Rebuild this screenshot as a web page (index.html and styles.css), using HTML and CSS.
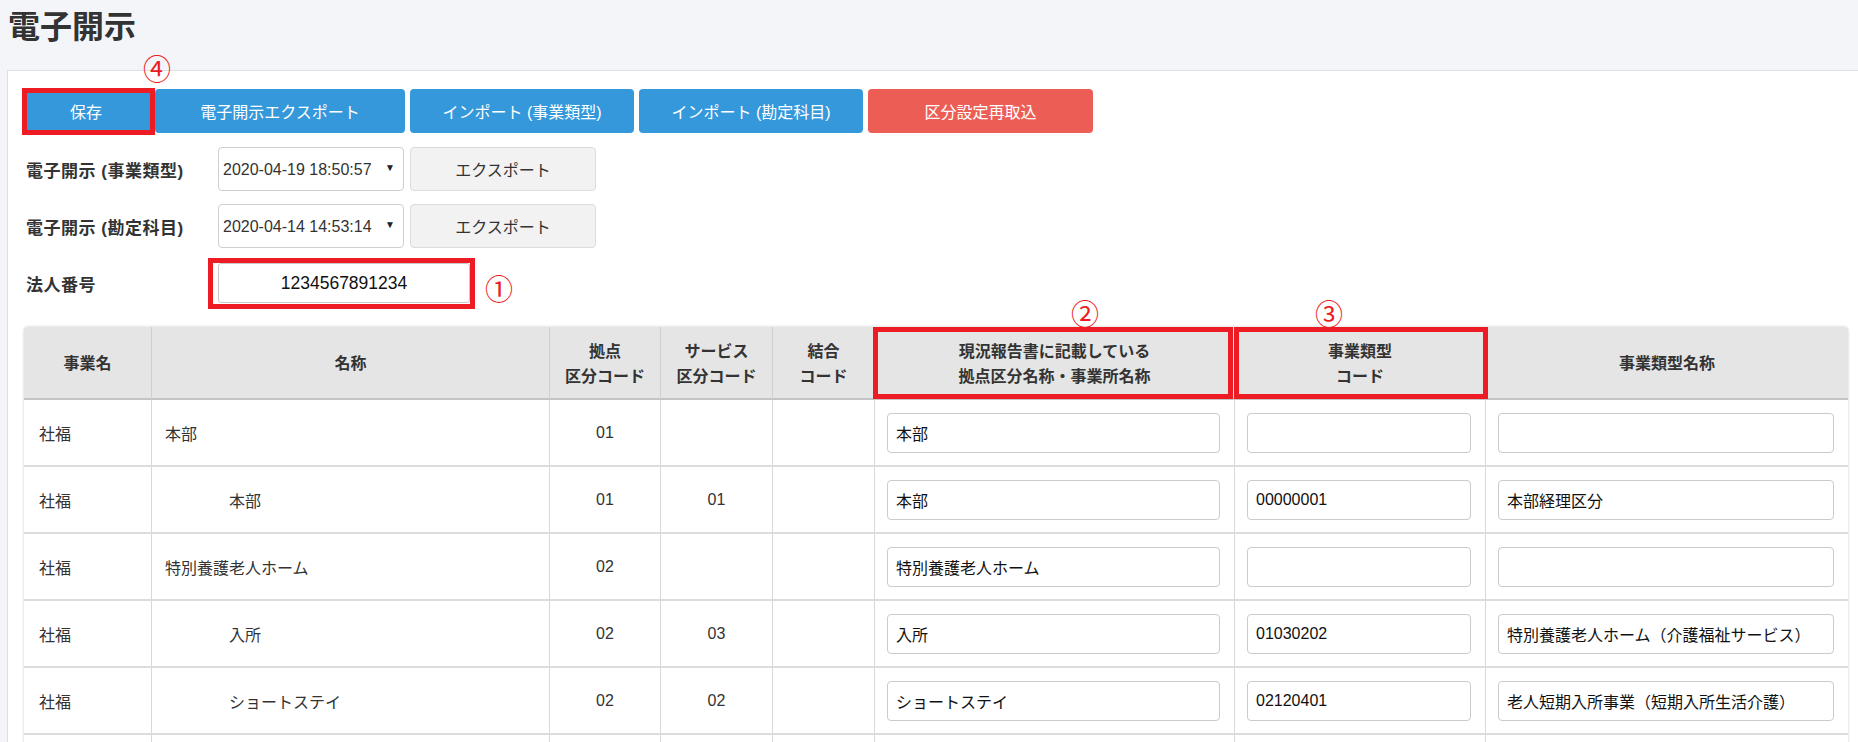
FILE: index.html
```html
<!DOCTYPE html>
<html lang="ja">
<head>
	<meta charset="UTF-8">
	<title>電子開示</title>
	<link rel="stylesheet" href="styles.css">
</head>
<body>
	<h1 class="page-title">電子開示</h1>
	<div class="panel">
		<div class="toolbar">
			<span class="mark mark-save">
				<button class="btn btn-blue btn-save">保存</button>
				<span class="num num-4">④</span>
			</span>
			<button class="btn btn-blue btn-wide">電子開示エクスポート</button>
			<button class="btn btn-blue">インポート (事業類型)</button>
			<button class="btn btn-blue">インポート (勘定科目)</button>
			<button class="btn btn-red">区分設定再取込</button>
		</div>

		<div class="form-row">
			<label class="form-label">電子開示 (事業類型)</label>
			<span class="select-wrap">
				<select class="select">
					<option>2020-04-19 18:50:57</option>
				</select>
			</span>
			<button class="btn btn-gray">エクスポート</button>
		</div>
		<div class="form-row">
			<label class="form-label">電子開示 (勘定科目)</label>
			<span class="select-wrap">
				<select class="select">
					<option>2020-04-14 14:53:14</option>
				</select>
			</span>
			<button class="btn btn-gray">エクスポート</button>
		</div>
		<div class="form-row form-row-corp">
			<label class="form-label">法人番号</label>
			<span class="mark mark-corp">
				<input class="corp-input" type="text" value="1234567891234">
			</span>
			<span class="num num-1">①</span>
		</div>

		<table class="grid">
			<colgroup>
				<col style="width:128px">
				<col style="width:398px">
				<col style="width:111px">
				<col style="width:112px">
				<col style="width:102px">
				<col style="width:360px">
				<col style="width:251px">
				<col style="width:362px">
			</colgroup>
			<thead>
				<tr>
					<th>事業名</th>
					<th>名称</th>
					<th>拠点<br>区分コード</th>
					<th>サービス<br>区分コード</th>
					<th>結合<br>コード</th>
					<th class="th-mark th-mark-2">現況報告書に記載している<br>拠点区分名称・事業所名称<span class="num num-2">②</span></th>
					<th class="th-mark th-mark-3">事業類型<br>コード<span class="num num-3">③</span></th>
					<th>事業類型名称</th>
				</tr>
			</thead>
			<tbody>
				<tr>
					<td class="c-biz">社福</td>
					<td class="c-name">本部</td>
					<td class="c-code">01</td>
					<td class="c-code"></td>
					<td class="c-code"></td>
					<td class="c-input"><input class="cell-input" type="text" value="本部"></td>
					<td class="c-input"><input class="cell-input" type="text" value=""></td>
					<td class="c-input"><input class="cell-input" type="text" value=""></td>
				</tr>
				<tr>
					<td class="c-biz">社福</td>
					<td class="c-name child">本部</td>
					<td class="c-code">01</td>
					<td class="c-code">01</td>
					<td class="c-code"></td>
					<td class="c-input"><input class="cell-input" type="text" value="本部"></td>
					<td class="c-input"><input class="cell-input" type="text" value="00000001"></td>
					<td class="c-input"><input class="cell-input" type="text" value="本部経理区分"></td>
				</tr>
				<tr>
					<td class="c-biz">社福</td>
					<td class="c-name">特別養護老人ホーム</td>
					<td class="c-code">02</td>
					<td class="c-code"></td>
					<td class="c-code"></td>
					<td class="c-input"><input class="cell-input" type="text" value="特別養護老人ホーム"></td>
					<td class="c-input"><input class="cell-input" type="text" value=""></td>
					<td class="c-input"><input class="cell-input" type="text" value=""></td>
				</tr>
				<tr>
					<td class="c-biz">社福</td>
					<td class="c-name child">入所</td>
					<td class="c-code">02</td>
					<td class="c-code">03</td>
					<td class="c-code"></td>
					<td class="c-input"><input class="cell-input" type="text" value="入所"></td>
					<td class="c-input"><input class="cell-input" type="text" value="01030202"></td>
					<td class="c-input"><input class="cell-input" type="text" value="特別養護老人ホーム（介護福祉サービス）"></td>
				</tr>
				<tr>
					<td class="c-biz">社福</td>
					<td class="c-name child">ショートステイ</td>
					<td class="c-code">02</td>
					<td class="c-code">02</td>
					<td class="c-code"></td>
					<td class="c-input"><input class="cell-input" type="text" value="ショートステイ"></td>
					<td class="c-input"><input class="cell-input" type="text" value="02120401"></td>
					<td class="c-input"><input class="cell-input" type="text" value="老人短期入所事業（短期入所生活介護）"></td>
				</tr>
				<tr>
					<td class="c-biz">社福</td>
					<td class="c-name child">デイサービス</td>
					<td class="c-code">02</td>
					<td class="c-code">04</td>
					<td class="c-code"></td>
					<td class="c-input"><input class="cell-input" type="text" value="デイサービス"></td>
					<td class="c-input"><input class="cell-input" type="text" value=""></td>
					<td class="c-input"><input class="cell-input" type="text" value=""></td>
				</tr>
			</tbody>
		</table>
	</div>
</body>
</html>
```

FILE: styles.css
```css
* {margin: 0; padding: 0; box-sizing: border-box;}
html, body {overflow: hidden;}
body {
	background: #f4f5f9;
	color: #333;
	font-family: "Liberation Sans", "Noto Sans CJK JP", sans-serif;
	font-size: 16px;
}
button, input, select {font-family: inherit; font-size: 16px;}

.page-title {
	font-family: "Noto Sans CJK JP", sans-serif;
	font-size: 32px;
	font-weight: bold;
	line-height: 40px;
	padding: 4px 0 0 8px;
	color: #333;
}

.panel {
	margin: 26px 0 0 7px;
	background: #fff;
	border-top: 1px solid #dfe0e3;
	border-left: 1px solid #dfe0e3;
	padding: 18px 0 40px 14px;
	min-height: 700px;
}

/* buttons */
.toolbar {display: flex; gap: 5px; height: 44px;}
.btn {
	height: 44px;
	border: 0;
	border-radius: 4px;
	color: #fff;
	width: 224px;
	cursor: pointer;
}
.btn-blue {background: #3498db;}
.btn-red {background: #ec5e55; width: 225px;}
.btn-wide {width: 250px;}
.btn-save {width: 128px;}
.btn-gray {
	background: #f2f2f2;
	border: 1px solid #dcdcdc;
	color: #333;
	width: 186px;
	margin-left: 6px;
}

/* annotations */
.mark {position: relative; display: inline-block;}
.mark::after, .th-mark::after {
	content: "";
	position: absolute;
	border: 5px solid #ed1c24;
	pointer-events: none;
}
.mark-save::after {top: -1px; bottom: -2px; left: 0; right: -5px;}
.mark-corp::after {top: -5px; bottom: -6px; left: -10px; right: -5px;}
.grid .th-mark {position: relative;}
.th-mark-2::after {top: 0; bottom: -1px; left: -2px; right: 1px;}
.th-mark-3::after {top: 0; bottom: -1px; left: -1px; right: -3px;}
.num {
	color: #ed1c24;
	font-family: "Noto Sans CJK JP", sans-serif;
	font-size: 28px;
	font-weight: normal;
	line-height: 28px;
}
.num-4, .num-2, .num-3 {position: absolute;}
.num-4 {left: 121px; top: -35px;}
.num-2 {left: 196px; top: -28px;}
.num-3 {left: 80px; top: -28px;}
.num-1 {margin: 10px 0 0 15px;}

/* form */
.form-row {display: flex; align-items: center; margin-top: 14px;}
.form-row + .form-row {margin-top: 13px;}
.form-row-corp {margin-top: 15px !important;}
.form-label {
	width: 196px;
	padding-left: 4px;
	font-size: 17px;
	letter-spacing: 0.5px;
	font-weight: bold;
	color: #333;
}
.select-wrap {position: relative; display: inline-block;}
.select-wrap::after {
	content: "▼";
	position: absolute;
	right: 9px;
	top: 15px;
	font-size: 10px;
	color: #222;
	pointer-events: none;
}
.select {
	appearance: none;
	-webkit-appearance: none;
	width: 186px;
	height: 44px;
	border: 1px solid #cfcfcf;
	border-radius: 4px;
	background: #fff;
	padding-left: 4px;
	color: #333;
	font-family: "Liberation Sans", sans-serif;
}
.corp-input {
	width: 252px;
	height: 40px;
	border: 1px solid #c8c8c8;
	border-radius: 3px;
	text-align: center;
	color: #111;
	font-size: 17.5px;
	display: block;
}

/* table */
.grid {
	margin: 24px 0 0 2px;
	width: 1824px;
	table-layout: fixed;
	border-collapse: separate;
	border-spacing: 0;
	border-radius: 4px 4px 0 0;
	box-shadow: 0 0 3px rgba(0, 0, 0, 0.22);
}
.grid th {
	background: #e5e5e5;
	height: 73px;
	font-weight: bold;
	line-height: 25px;
	text-align: center;
	vertical-align: middle;
	border-right: 1px solid #d0d0d0;
	border-bottom: 2px solid #c4c4c4;
	color: #333;
	font-family: "Noto Sans CJK JP", sans-serif;
}
.grid th:first-child {border-top-left-radius: 4px;}
.grid th:last-child {border-top-right-radius: 4px; border-right: 0;}
.grid tbody tr {height: 67px;}
.grid td {
	border-right: 1px solid #d8d8d8;
	border-bottom: 2px solid #dcdcdc;
	vertical-align: middle;
	color: #333;
}
.grid td:last-child {border-right: 0;}
.c-biz {padding-left: 15px;}
.c-name {padding-left: 13px;}
.c-name.child {padding-left: 77px;}
.c-code {text-align: center;}
.c-input {padding: 0 14px 0 12px;}
.cell-input {
	display: block;
	width: 100%;
	height: 40px;
	border: 1px solid #cbcbcb;
	border-radius: 4px;
	padding: 0 8px;
	color: #111;
}
```
